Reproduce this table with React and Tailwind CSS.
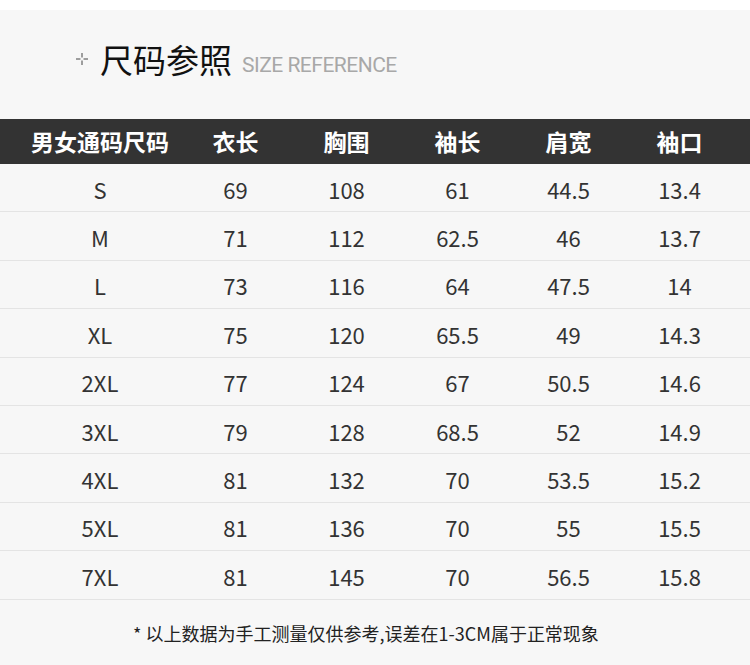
const headers = ['男女通码尺码', '衣长', '胸围', '袖长', '肩宽', '袖口'];

const rows = [
  ['S', '69', '108', '61', '44.5', '13.4'],
  ['M', '71', '112', '62.5', '46', '13.7'],
  ['L', '73', '116', '64', '47.5', '14'],
  ['XL', '75', '120', '65.5', '49', '14.3'],
  ['2XL', '77', '124', '67', '50.5', '14.6'],
  ['3XL', '79', '128', '68.5', '52', '14.9'],
  ['4XL', '81', '132', '70', '53.5', '15.2'],
  ['5XL', '81', '136', '70', '55', '15.5'],
  ['7XL', '81', '145', '70', '56.5', '15.8'],
];

const cjk = { fontFamily: '"Noto Sans CJK SC", "Noto Sans", sans-serif' };

const Cross = () => (
  <svg width="12" height="12" viewBox="0 0 12 12" className="shrink-0">
    <g stroke="#444" strokeWidth="1">
      <line x1="6" y1="0" x2="6" y2="4.5" />
      <line x1="6" y1="7.5" x2="6" y2="12" />
      <line x1="0" y1="6" x2="4.5" y2="6" />
      <line x1="7.5" y1="6" x2="12" y2="6" />
    </g>
  </svg>
);

function Row({ cells, head }) {
  return (
    <div
      className={
        head
          ? 'grid grid-cols-[135px_repeat(5,111px)] pl-[45px] h-[45px] bg-[#333333] text-white font-bold text-[23px]'
          : 'grid grid-cols-[135px_repeat(5,111px)] pl-[45px] pt-[3px] h-[48.4px] border-b border-[#e4e4e4] text-[#333] text-[22px]'
      }
    >
      {cells.map((c, i) => (
        <div
          key={i}
          className={
            i === 0
              ? 'flex items-center justify-center whitespace-nowrap pr-[25px]'
              : 'flex items-center justify-center whitespace-nowrap'
          }
        >
          {c}
        </div>
      ))}
    </div>
  );
}

export default function App() {
  return (
    <div className="w-[750px] h-[665px] bg-[#f7f7f7] overflow-hidden" style={cjk}>
      <div className="h-[10px] bg-white" />

      {/* title */}
      <div className="h-[109px] pt-[27px] pl-[76px]">
        <div className="flex items-center h-[44px]">
          <Cross />
          <span className="ml-[12px] text-[33px] text-[#111] leading-none">尺码参照</span>
          <span
            className="ml-[10px] mt-[12px] text-[21px] text-[#a8a8a8] tracking-[-0.5px] leading-none"
            style={{ fontFamily: 'Roboto, sans-serif' }}
          >
            SIZE REFERENCE
          </span>
        </div>
      </div>

      {/* table */}
      <Row cells={headers} head />
      {rows.map((r) => (
        <Row key={r[0]} cells={r} />
      ))}

      {/* note */}
      <div className="flex justify-center pt-[20px] pr-[18px] text-[18px] text-[#222]">
        * 以上数据为手工测量仅供参考,误差在1-3CM属于正常现象
      </div>
    </div>
  );
}
